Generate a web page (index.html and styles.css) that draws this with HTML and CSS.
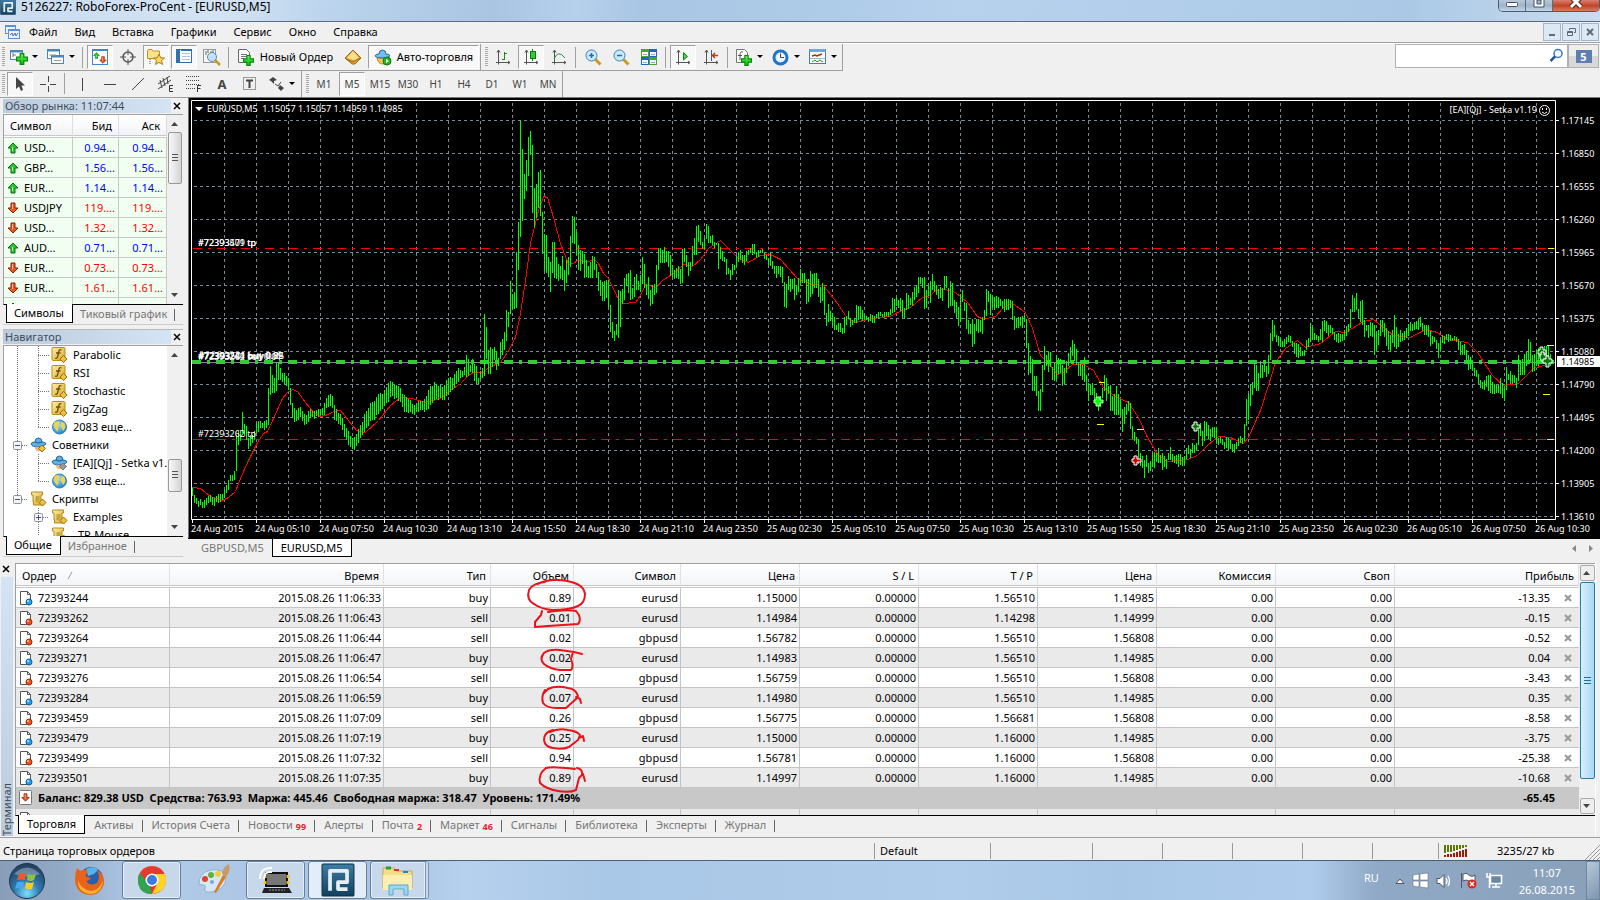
FILE: index.html
```html
<!DOCTYPE html>
<html lang="ru">
<head>
<meta charset="utf-8">
<title>5126227: RoboForex-ProCent - [EURUSD,M5]</title>
<link rel="stylesheet" href="styles.css">
</head>
<body>
<svg class="defs" width="0" height="0" aria-hidden="true">
  <defs>
    <linearGradient id="gold" x1="0" y1="0" x2="1" y2="1"><stop offset="0" stop-color="#fff0a8"/><stop offset="1" stop-color="#d9a520"/></linearGradient>
    <linearGradient id="plus" x1="0" y1="0" x2="0" y2="1"><stop offset="0" stop-color="#6bf06b"/><stop offset="1" stop-color="#00b800"/></linearGradient>
    <linearGradient id="navy" x1="0" y1="0" x2="0" y2="1"><stop offset="0" stop-color="#3f7da6"/><stop offset="1" stop-color="#10405f"/></linearGradient>
    <radialGradient id="orb" cx=".5" cy=".85" r=".8"><stop offset="0" stop-color="#7fe0ff"/><stop offset=".45" stop-color="#2f7ab0"/><stop offset="1" stop-color="#24405e"/></radialGradient>
    <radialGradient id="globe" cx=".4" cy=".35" r=".7"><stop offset="0" stop-color="#a8e0ff"/><stop offset="1" stop-color="#1b7fc8"/></radialGradient>
  </defs>
  <symbol id="up" viewBox="0 0 12 12"><path d="M6 1 11 6 8 6 8 11 4 11 4 6 1 6Z" fill="#2fc52f" stroke="#08700f"/><path d="M5 5h1v4H5z" fill="#a6f5a6"/></symbol>
  <symbol id="down" viewBox="0 0 12 12"><path d="M6 11 11 6 8 6 8 1 4 1 4 6 1 6Z" fill="#ee5a24" stroke="#8a2006"/><path d="M5 2h1v5H5z" fill="#ffb89a"/></symbol>
  <symbol id="drop" viewBox="0 0 7 4"><path d="M0 0H6L3 3Z" fill="#000"/></symbol>
  <symbol id="func" viewBox="0 0 16 16"><rect x=".5" y=".5" width="13" height="13" rx="1" fill="url(#gold)" stroke="#b98d1c"/><path d="M10 3C8 2 7.500 3 7 6L6 10Q5.500 12 3.500 11M4.500 6H9" fill="none" stroke="#6b5010" stroke-width="1.300"/><path d="M12 8.500 15.500 12 12 15.500 8.500 12Z" fill="#f0c040" stroke="#98700c"/></symbol>
  <symbol id="world" viewBox="0 0 16 16"><circle cx="8" cy="8" r="7" fill="url(#globe)" stroke="#2d84bd"/><path d="M3 3 7 2 8 4 6 7 7 9 6 13 4 10 2 7ZM10 3 13 4 14 8 12 12 10 9 9 7Z" fill="#f0d54a"/></symbol>
  <symbol id="hat" viewBox="0 0 17 16"><path d="M5 5Q5 1 8.500 1T12 5Q16 5 16 7Q14 10 8 10T1 7Q1 5 5 5Z" fill="#5db0e4" stroke="#2a6c9c"/><path d="M5 5Q8 7 12 5" stroke="#1f5c8c" fill="none"/><path d="M5 10Q5 15 10 14L12 10Z" fill="#e8b878"/></symbol>
  <symbol id="advisor" viewBox="0 0 17 16"><use href="#hat" width="17" height="16"/><path d="M12 8 15.500 11.500 12 15 8.500 11.500Z" fill="#f0c040" stroke="#98700c"/></symbol>
  <symbol id="advisor-off" viewBox="0 0 17 16"><use href="#hat" width="17" height="16"/><path d="M12 8 15.500 11.500 12 15 8.500 11.500Z" fill="#999" stroke="#777"/></symbol>
  <symbol id="script" viewBox="0 0 16 16"><path d="M1 1H12V4H10.500V11H13V14H3V11H2.500V4H1Z" fill="url(#gold)" stroke="#b08a20"/><path d="M5 6H9M5 8H9M5 10H8" stroke="#a07a20"/><path d="M12 8 15.500 11.500 12 15 8.500 11.500Z" fill="#f0c040" stroke="#98700c"/></symbol>
  <symbol id="g-line" viewBox="0 0 21 18"><path d="M10.500 0V18" stroke="#777" stroke-dasharray="1 1" fill="none"/></symbol>
  <symbol id="g-tee" viewBox="0 0 21 18"><path d="M10.500 0V18M10 9.500H21" stroke="#777" stroke-dasharray="1 1" fill="none"/></symbol>
  <symbol id="g-end" viewBox="0 0 21 18"><path d="M10.500 0V9M10 9.500H21" stroke="#777" stroke-dasharray="1 1" fill="none"/></symbol>
  <symbol id="g-minus" viewBox="0 0 21 18"><path d="M10.500 0V5M10.500 14V18M15 9.500H21" stroke="#777" stroke-dasharray="1 1" fill="none"/><rect x="6.500" y="5.500" width="8" height="8" rx="1" fill="#f4f4f4" stroke="#919191"/><path d="M8 9.500H13" stroke="#3a55a4"/></symbol>
  <symbol id="g-last" viewBox="0 0 21 18"><path d="M10.500 0V5M15 9.500H21" stroke="#777" stroke-dasharray="1 1" fill="none"/><rect x="6.500" y="5.500" width="8" height="8" rx="1" fill="#f4f4f4" stroke="#919191"/><path d="M8 9.500H13" stroke="#3a55a4"/></symbol>
  <symbol id="g-plus" viewBox="0 0 21 18"><path d="M10.500 0V5M10.500 14V18M15 9.500H21" stroke="#777" stroke-dasharray="1 1" fill="none"/><rect x="6.500" y="5.500" width="8" height="8" rx="1" fill="#f4f4f4" stroke="#919191"/><path d="M8 9.500H13M10.500 7V12" stroke="#3a55a4"/></symbol>
  <symbol id="page" viewBox="0 0 14 16"><path d="M1.500 1.500H8.500L11.500 4.500V14.500H1.500Z" fill="#fff" stroke="#555"/><path d="M8.500 1.500V4.500H11.500" fill="none" stroke="#555"/></symbol>
  <symbol id="buy" viewBox="0 0 14 16"><use href="#page" width="14" height="16"/><circle cx="10" cy="12" r="3" fill="#28a0ee" stroke="#0b5f9e"/><circle cx="9" cy="11" r="1" fill="#c5eaff"/></symbol>
  <symbol id="sell" viewBox="0 0 14 16"><use href="#page" width="14" height="16"/><circle cx="10" cy="12" r="3" fill="#ee5020" stroke="#9b2c08"/><circle cx="9" cy="11" r="1" fill="#ffc9b0"/></symbol>
  <symbol id="cross" viewBox="0 0 8 8"><path d="M1 1 7 7M7 1 1 7" stroke="#999" stroke-width="2"/></symbol>
  <symbol id="close" viewBox="0 0 8 8"><path d="M1 1 7 7M7 1 1 7" stroke="#000" stroke-width="1.500"/></symbol>
  <symbol id="arr-up" viewBox="0 0 8 5"><path d="M0 4H7L3.500 0Z" fill="#444"/></symbol>
  <symbol id="arr-down" viewBox="0 0 8 5"><path d="M0 0H7L3.500 4Z" fill="#444"/></symbol>
  <symbol id="axes" viewBox="0 0 16 16"><path d="M3.500 1V15.500M1 13.500H15M2 3.500 3.500 1 5 3.500M13 12 15 13.500 13 15" fill="none" stroke="#555"/></symbol>
  <symbol id="plussign" viewBox="0 0 10 10"><path d="M3.500 .5H6.500V3.500H9.500V6.500H6.500V9.500H3.500V6.500H.5V3.500H3.500Z" fill="url(#plus)" stroke="#078a07"/></symbol>
  <symbol id="logo" viewBox="0 0 32 32"><rect x="1" y="1" width="30" height="30" rx="1" fill="url(#navy)" stroke="#0c2f48"/><path d="M8.500 26V7.500H24.500V18H16V24.500H25" fill="none" stroke="#e6eef4" stroke-width="3.500" stroke-linejoin="round"/></symbol>
</svg>

<header class="titlebar">
  <svg class="i16" width="16" height="16"><use href="#logo"/></svg>
  <h1>5126227: RoboForex-ProCent - [EURUSD,M5]</h1>
  <div class="caption">
    <button aria-label="Свернуть"><svg width="14" height="8"><rect x="1.500" y="2.500" width="11" height="4" rx="1" fill="#fff" stroke="#445062"/></svg></button>
    <button aria-label="Развернуть"><svg width="14" height="10"><path d="M2 -3H12V7H2Z" fill="#fff" stroke="#445062"/><path d="M5 0H9V4H5Z" fill="#9fb5cd" stroke="#445062"/></svg></button>
    <button class="caption-close" aria-label="Закрыть"><svg width="14" height="10"><path d="M2 -3 12 7M12 -3 2 7" stroke="#5b2018" stroke-width="5"/><path d="M2 -3 12 7M12 -3 2 7" stroke="#fff" stroke-width="3"/></svg></button>
  </div>
</header>

<nav class="menubar">
  <svg class="menu-ico" width="16" height="16"><g fill="#eaf3ff" stroke="#5b8fd8"><rect x=".5" y="1.500" width="10" height="8"/><rect x="3.500" y="5.500" width="11" height="9"/></g><path d="M.5 2.500H11M3.500 6.500H15" stroke="#5b8fd8"/><path d="M5 11 7 9 8 12 10 9 11 12 13 9" fill="none" stroke="#3a70c8"/></svg>
  <button>Файл</button><button>Вид</button><button>Вставка</button><button>Графики</button><button>Сервис</button><button>Окно</button><button>Справка</button>
  <div class="mdi">
    <button aria-label="Свернуть окно"><svg width="10" height="10"><path d="M2 8H8" stroke="#5d6b7c" stroke-width="2"/></svg></button>
    <button aria-label="Восстановить окно"><svg width="10" height="10"><path d="M3.500 3V1.500H9.500V5.500H8M1.500 4.500H6.500V8.500H1.500ZM1 5.500H7" fill="none" stroke="#5d6b7c"/></svg></button>
    <button aria-label="Закрыть окно"><svg width="10" height="10"><path d="M2 2 8 8M8 2 2 8" stroke="#5d6b7c" stroke-width="2"/></svg></button>
  </div>
</nav>

<div class="toolrow">
  <div class="toolbar">
    <span class="grip"></span>
    <button class="wide" aria-label="Новый график"><svg width="18" height="16"><rect x=".5" y="1.500" width="12" height="9" fill="#fff" stroke="#4a86b8"/><path d="M.5 2.500H12.500" stroke="#4a86b8" stroke-width="2"/><path d="M3 8V4M3 6H6" stroke="#777"/><use href="#plussign" x="6" y="4" width="12" height="12"/></svg><svg width="7" height="4"><use href="#drop"/></svg></button>
    <button class="wide" aria-label="Профили"><svg width="18" height="16"><g fill="#fff" stroke="#4a86b8"><rect x=".5" y=".5" width="12" height="9"/><rect x="4.500" y="6.500" width="12" height="8"/></g><path d="M.5 1.500H12.500M4.500 7.500H16.500" stroke="#4a86b8" stroke-width="2"/><path d="M7 11.500H14M2 6H9" stroke="#999"/></svg><svg width="7" height="4"><use href="#drop"/></svg></button>
    <span class="sep"></span>
    <button class="tool on" aria-label="Обзор рынка"><svg width="16" height="16"><rect x=".5" y=".5" width="15" height="15" fill="#fff" stroke="#3f87c8"/><path d="M.5 1H15.500" stroke="#3f87c8" stroke-width="2"/><use href="#up" x="1" y="3" width="7" height="7"/><use href="#down" x="7" y="7" width="8" height="8"/></svg></button>
    <button class="tool" aria-label="Окно данных"><svg width="16" height="16"><circle cx="8" cy="8" r="5" fill="none" stroke="#555" stroke-width="1.500"/><path d="M8 0V6M8 10V16M0 8H6M10 8H16" stroke="#555"/></svg></button>
    <button class="tool on" aria-label="Навигатор"><svg width="18" height="16"><path d="M.5 2V9.500H12.500V2H6L5 .5H1.500Z" fill="#f8e28a" stroke="#b8942a"/><path d="M3 10V15" stroke="#555" stroke-dasharray="1 1"/><path d="M12 5 13.700 8.800 17.500 9 14.500 11.500 15.500 15.500 12 13.300 8.500 15.500 9.500 11.500 6.500 9 10.300 8.800Z" fill="#ffd95a" stroke="#a87c10"/></svg></button>
    <button class="tool on" aria-label="Терминал"><svg width="16" height="16"><rect x=".5" y=".5" width="15" height="13" fill="#fff" stroke="#2f70b0"/><path d="M2.500 1V13" stroke="#2f70b0" stroke-width="3"/><path d="M6 4.500H14M6 7.500H14M6 10.500H14" stroke="#a8c4e8"/><path d="M5 1H15" stroke="#2f70b0" stroke-width="2"/></svg></button>
    <button class="tool" aria-label="Тестер стратегий"><svg width="18" height="17"><rect x=".5" y=".5" width="12" height="13" fill="#f5f5f5" stroke="#999"/><path d="M3 2V6M5 1V4M8 2V5M10 1V5" stroke="#666"/><circle cx="9" cy="8" r="4.500" fill="#bfe3fa" stroke="#5a87ad"/><path d="M12 11 17 16" stroke="#c99a20" stroke-width="2.500"/></svg></button>
    <span class="sep"></span>
    <button class="textual order"><svg width="17" height="17"><path d="M.5 .5H8.500L11.500 3.500V13.500H.5Z" fill="#fff" stroke="#666"/><path d="M3 5.500H9M3 7.500H9M3 9.500H6" stroke="#777"/><use href="#plussign" x="5" y="6" width="11" height="11"/></svg>Новый Ордер</button>
    <button class="tool" aria-label="MetaEditor"><svg width="18" height="16"><path d="M1 9 9 1 12 4 17 9 11 15H8Z" fill="#e0a838" stroke="#9a6a12"/><path d="M3 9 9 2 15 9 10 11Z" fill="#ffe08a"/><path d="M2 10 9 13 16 9" stroke="#9a6a12" fill="none"/></svg></button>
    <button class="textual on auto"><svg width="18" height="17"><path d="M3 9Q4 15 9 15T15 9Z" fill="#f0c456" stroke="#b48a22"/><path d="M5 5Q5 1 8.500 1T12 5Q16 5 16 7Q14 9 8 9T1 7Q1 5 5 5Z" fill="#70bff0" stroke="#2a6c9c"/><circle cx="13" cy="12" r="4" fill="#22b422" stroke="#0d7d0d"/><path d="M12 10V14L15 12Z" fill="#fff"/></svg>Авто-торговля</button>
  </div>
  <div class="toolbar">
    <span class="grip"></span>
    <button class="tool" aria-label="Бары"><svg width="16" height="16"><use href="#axes" width="16" height="16"/><path d="M9.500 3V11M9.500 4.500H12M7 10.500H9.500" stroke="#1a8a1a" fill="none"/></svg></button>
    <button class="tool on" aria-label="Свечи"><svg width="16" height="16"><use href="#axes" width="16" height="16"/><path d="M9.500 0V12" stroke="#0c7a0c"/><rect x="7.500" y="2.500" width="5" height="7" fill="#2fce2f" stroke="#0c7a0c"/></svg></button>
    <button class="tool" aria-label="Линия"><svg width="16" height="16"><use href="#axes" width="16" height="16"/><path d="M3 10Q7 0 14 9" stroke="#1a9a3a" fill="none"/></svg></button>
    <span class="sep"></span>
    <button class="tool" aria-label="Увеличить"><svg width="17" height="17"><path d="M10 10 15.500 15.500" stroke="#c99a20" stroke-width="3"/><circle cx="6.500" cy="6.500" r="5.500" fill="#c9eafc" stroke="#3f7fb5"/><path d="M4 6.500H9M6.500 4V9" stroke="#2a6ba5" stroke-width="1.500"/></svg></button>
    <button class="tool" aria-label="Уменьшить"><svg width="17" height="17"><path d="M10 10 15.500 15.500" stroke="#c99a20" stroke-width="3"/><circle cx="6.500" cy="6.500" r="5.500" fill="#c9eafc" stroke="#3f7fb5"/><path d="M4 6.500H9" stroke="#2a6ba5" stroke-width="1.500"/></svg></button>
    <button class="tool" aria-label="Мозаика"><svg width="16" height="16"><path d="M0 0H8V8H0ZM8 8H16V16H8Z" fill="#4ba52a"/><path d="M8 0H16V8H8ZM0 8H8V16H0Z" fill="#2463cf"/><path d="M1 3H7V7H1ZM9 3H15V7H9ZM1 11H7V15H1ZM9 11H15V15H9Z" fill="#f4f8ff"/><path d="M2 5.500H6M10 5.500H14M2 13.500H6M10 13.500H14" stroke="#9ab"/></svg></button>
    <span class="sep"></span>
    <button class="tool on" aria-label="Автопрокрутка"><svg width="16" height="16"><use href="#axes" width="16" height="16"/><path d="M8.500 3.500V11L12.500 7.500Z" fill="#4fd04f" stroke="#0f8a0f"/></svg></button>
    <button class="tool" aria-label="Сдвиг графика"><svg width="16" height="16"><use href="#axes" width="16" height="16"/><path d="M8.500 1V12" stroke="#2a60b8"/><path d="M15 6.500H10M12 4 9.500 6.500 12 9" stroke="#c03a10" fill="none" stroke-width="1.500"/></svg></button>
    <span class="sep"></span>
    <button class="wide" aria-label="Индикаторы"><svg width="18" height="17"><path d="M1.500 .5H9.500L12.500 3.500V13.500H1.500Z" fill="#fff" stroke="#777"/><path d="M8 3Q5 2 5 6V11M3 6.500H7" fill="none" stroke="#555"/><use href="#plussign" x="6" y="6" width="11" height="11"/></svg><svg width="7" height="4"><use href="#drop"/></svg></button>
    <button class="wide" aria-label="Периоды"><svg width="18" height="17"><circle cx="8.500" cy="8.500" r="6.500" fill="#eef7ff" stroke="#1f74d0" stroke-width="3"/><path d="M8.500 4.500V8.500H12" stroke="#445" fill="none"/></svg><svg width="7" height="4"><use href="#drop"/></svg></button>
    <button class="wide" aria-label="Шаблоны"><svg width="18" height="16"><rect x=".5" y=".5" width="16" height="14" fill="#fff" stroke="#3f80b8"/><path d="M.5 1.500H16.500" stroke="#6fa8dd" stroke-width="3"/><path d="M3 7 6 6 8 7 13 5" fill="none" stroke="#a33010" stroke-width="1.500"/><path d="M1 9.500H16" stroke="#9bc"/><path d="M3 13 6 11 8 13 11 11 14 13" fill="none" stroke="#2a9a2a"/></svg><svg width="7" height="4"><use href="#drop"/></svg></button>
  </div>
  <div class="search">
    <input type="text" aria-label="Поиск">
    <svg width="15" height="15"><circle cx="9" cy="5.500" r="4" fill="#fff" stroke="#3a70cf" stroke-width="1.500"/><path d="M6 8.500 1.500 13" stroke="#2a50b8" stroke-width="2.500"/></svg>
    <button aria-label="Сообщения"><span class="bubble">5</span></button>
  </div>
</div>

<div class="toolrow second">
  <div class="toolbar">
    <span class="grip"></span>
    <button class="tool on" aria-label="Курсор"><svg width="16" height="16"><path d="M4 1V13L7 10.500 9 15 11 14 9.500 9.500H13Z" fill="#444"/></svg></button>
    <button class="tool" aria-label="Перекрестие"><svg width="16" height="16"><path d="M8.500 0V6M8.500 10V16M0 8.500H6M10 8.500H16" stroke="#444"/></svg></button>
    <span class="sep"></span>
    <button class="tool" aria-label="Вертикальная линия"><svg width="16" height="16"><path d="M8.500 2V15" stroke="#444"/></svg></button>
    <button class="tool" aria-label="Горизонтальная линия"><svg width="16" height="16"><path d="M2 8.500H14" stroke="#444"/></svg></button>
    <button class="tool" aria-label="Трендовая линия"><svg width="16" height="16"><path d="M2 14 14 2" stroke="#444"/></svg></button>
    <button class="tool" aria-label="Канал"><svg width="18" height="17"><path d="M1 9 13 1M1 14 14 5M3 5 5 13M6 3 8 11M10 2 11 9" stroke="#444"/><path d="M16 10.500H12.500V16.500H16M12 13.500H15.500" stroke="#333" fill="none"/></svg></button>
    <button class="tool" aria-label="Фибоначчи"><svg width="18" height="17"><path d="M1 1.500H15M1 5.500H15M1 9.500H15M1 13.500H10" stroke="#444" stroke-dasharray="1 1"/><path d="M16 10.500H12.500V17M12 13.500H15.500" stroke="#333" fill="none"/></svg></button>
    <button class="tool glyph">A</button>
    <button class="tool" aria-label="Текстовая метка"><svg width="14" height="14"><rect x=".5" y=".5" width="12" height="12" fill="none" stroke="#444" stroke-dasharray="1 1"/><path d="M3 3.500H10M6.500 3V11" stroke="#444" stroke-width="2"/></svg></button>
    <button class="wide" aria-label="Стрелки"><svg width="16" height="16"><path d="M4 1 8 4 5 5 5 8 2 5 0 4Z" fill="#444"/><path d="M6 8 9 10 12 6" fill="none" stroke="#444"/><path d="M11 9 15 12 12 15 9 12Z" fill="#444"/></svg><svg width="7" height="4"><use href="#drop"/></svg></button>
  </div>
  <div class="toolbar periods">
    <span class="grip"></span>
    <button class="tool">M1</button><button class="tool on">M5</button><button class="tool">M15</button><button class="tool">M30</button><button class="tool">H1</button><button class="tool">H4</button><button class="tool">D1</button><button class="tool">W1</button><button class="tool">MN</button>
  </div>
</div>

<main class="workspace">
  <aside class="dock">
    <section class="pane">
      <header><h2>Обзор рынка: 11:07:44</h2><button aria-label="Закрыть обзор рынка"><svg width="8" height="8"><use href="#close"/></svg></button></header>
      <div class="pane-body">
        <div class="pane-scroll">
        <table class="quotes">
          <colgroup><col><col class="bid"><col class="ask"></colgroup>
          <thead><tr><th>Символ</th><th>Бид</th><th>Аск</th></tr></thead>
          <tbody>
            <tr class="rise"><td><svg width="12" height="12"><use href="#up"/></svg>USD...</td><td>0.94...</td><td>0.94...</td></tr>
            <tr class="rise"><td><svg width="12" height="12"><use href="#up"/></svg>GBP...</td><td>1.56...</td><td>1.56...</td></tr>
            <tr class="rise"><td><svg width="12" height="12"><use href="#up"/></svg>EUR...</td><td>1.14...</td><td>1.14...</td></tr>
            <tr class="fall"><td><svg width="12" height="12"><use href="#down"/></svg>USDJPY</td><td>119....</td><td>119....</td></tr>
            <tr class="fall"><td><svg width="12" height="12"><use href="#down"/></svg>USD...</td><td>1.32...</td><td>1.32...</td></tr>
            <tr class="rise"><td><svg width="12" height="12"><use href="#up"/></svg>AUD...</td><td>0.71...</td><td>0.71...</td></tr>
            <tr class="fall"><td><svg width="12" height="12"><use href="#down"/></svg>EUR...</td><td>0.73...</td><td>0.73...</td></tr>
            <tr class="fall"><td><svg width="12" height="12"><use href="#down"/></svg>EUR...</td><td>1.61...</td><td>1.61...</td></tr>
            <tr class="rise"><td><svg width="12" height="12"><use href="#up"/></svg></td><td></td><td></td></tr>
          </tbody>
        </table>
        </div>
        <div class="scroll"><svg width="8" height="5"><use href="#arr-up"/></svg><i class="thumb high"></i><svg class="end" width="8" height="5"><use href="#arr-down"/></svg></div>
      </div>
      <div class="tabs"><button class="tab active">Символы</button><button class="tab">Тиковый график</button></div>
    </section>
    <section class="pane navigator">
      <header><h2>Навигатор</h2><button aria-label="Закрыть навигатор"><svg width="8" height="8"><use href="#close"/></svg></button></header>
      <div class="pane-body">
        <ul class="tree">
          <li><svg class="g"><use href="#g-line"/></svg><svg class="g"><use href="#g-tee"/></svg><svg class="t"><use href="#func"/></svg>Parabolic</li>
          <li><svg class="g"><use href="#g-line"/></svg><svg class="g"><use href="#g-tee"/></svg><svg class="t"><use href="#func"/></svg>RSI</li>
          <li><svg class="g"><use href="#g-line"/></svg><svg class="g"><use href="#g-tee"/></svg><svg class="t"><use href="#func"/></svg>Stochastic</li>
          <li><svg class="g"><use href="#g-line"/></svg><svg class="g"><use href="#g-tee"/></svg><svg class="t"><use href="#func"/></svg>ZigZag</li>
          <li><svg class="g"><use href="#g-line"/></svg><svg class="g"><use href="#g-end"/></svg><svg class="t"><use href="#world"/></svg>2083 еще...</li>
          <li><svg class="g"><use href="#g-minus"/></svg><svg class="t"><use href="#advisor"/></svg>Советники</li>
          <li><svg class="g"><use href="#g-line"/></svg><svg class="g"><use href="#g-tee"/></svg><svg class="t"><use href="#advisor-off"/></svg>[EA][Qj] - Setka v1.19</li>
          <li><svg class="g"><use href="#g-line"/></svg><svg class="g"><use href="#g-end"/></svg><svg class="t"><use href="#world"/></svg>938 еще...</li>
          <li><svg class="g"><use href="#g-last"/></svg><svg class="t"><use href="#script"/></svg>Скрипты</li>
          <li><svg class="g"></svg><svg class="g"><use href="#g-plus"/></svg><svg class="t"><use href="#script"/></svg>Examples</li>
          <li><svg class="g"></svg><svg class="g"><use href="#g-line"/></svg><svg class="t"><use href="#script"/></svg>_TP-Mouse</li>
        </ul>
        <div class="scroll"><svg width="8" height="5"><use href="#arr-up"/></svg><i class="thumb low"></i><svg class="end" width="8" height="5"><use href="#arr-down"/></svg></div>
      </div>
      <div class="tabs"><button class="tab active">Общие</button><button class="tab">Избранное</button></div>
    </section>
  </aside>

  <section class="charts">
    <svg class="chart" id="chart" viewBox="188 97 1412 441" preserveAspectRatio="xMinYMin meet" role="img" aria-label="График EURUSD,M5">
      <rect x="188" y="97" width="1412" height="441" fill="#000"/>
      <path d="M188 97.500H1600M188.500 97V538" stroke="#777"/>
      <g transform="translate(.5 .5)" shape-rendering="crispEdges" fill="none">
        <path id="grid" stroke="#778899" stroke-dasharray="3 3"/>
        <path d="M192 362H1555" stroke="#778899"/>
        <path d="M192 248H1555M192 439H1555" stroke="#f00" stroke-dasharray="9 6 3 6"/>
        <path id="average" stroke="#f00"/>
      </g>
      <path d="M192 362H1555" stroke="#32cd32" stroke-width="4" stroke-dasharray="9 6 3 6"/>
      <path id="bars" fill="#0f0" shape-rendering="crispEdges"/>
      <path d="M1099 382H1105M1097 424H1104M1137 429H1144M1547 345H1554M1543 394H1550M1547 439H1554M1548 248H1554" stroke="#ff0" shape-rendering="crispEdges"/>
      <g fill="#067a06" stroke="#fff">
        <path d="M1096 397H1100V400H1103V403H1100V406H1096V403H1094V400H1096Z" fill="#0f0" stroke="#bfb"/>
        <path d="M1134 456H1137V459H1141V462H1137V465H1134V462H1132V459H1134Z" fill="#c00"/>
        <path d="M1194 422H1197V425H1200V428H1197V431H1194V428H1192V425H1194Z"/>
        <path d="M1540 347H1543V350H1546V354H1543V357H1540V354H1538V350H1540Z"/>
        <path d="M1541 352H1544V355H1547V359H1544V361H1541V359H1540V355H1541Z"/>
        <path d="M1546 356H1549V359H1552V363H1549V367H1546V363H1543V359H1546Z"/>
      </g>
      <path d="M191.500 519.500V100.500H1555.500V519.500Z" fill="none" stroke="#fff"/>
      <path id="ticks" stroke="#fff" fill="none" shape-rendering="crispEdges"/>
      <path d="M195 107H203L199 111Z" fill="#fff"/>
      <text x="207" y="112">EURUSD,M5&#160; 1.15057 1.15057 1.14959 1.14985</text>
      <text x="1537" y="113" text-anchor="end">[EA][Qj] - Setka v1.19</text>
      <g fill="none" stroke="#fff"><circle cx="1544.500" cy="110.500" r="5"/><path d="M1542 112Q1544.500 115 1547 112M1542.500 108V110M1546.500 108V110"/></g>
      <text x="198" y="246">#72393479 tp</text><text x="198" y="246">#72393501 tp</text>
      <text x="198" y="437">#72393262 tp</text>
      <text x="198" y="359">#72393244 buy 0.89</text><text x="198" y="359">#72393271 buy 0.02</text><text x="199" y="359">#72393501 buy 0.25</text><text x="198" y="360">#72393262 sell 0.01</text>
      <rect x="1557" y="356" width="43" height="11" fill="#fff"/>
      <text class="now" x="1561" y="365">1.14985</text>
      <g id="labels"></g>
    </svg>
    <div class="charttabs"><button>GBPUSD,M5</button><button class="active">EURUSD,M5</button>
      <svg width="24" height="8"><path d="M5 0V7L1 3.500ZM18 0V7L22 3.500Z" fill="#888"/></svg></div>
  </section>
</main>

<section class="terminal">
  <div class="spine"><button aria-label="Закрыть терминал"><svg width="8" height="8"><use href="#close"/></svg></button><span>Терминал</span></div>
  <div class="terminal-main">
    <div class="terminal-body">
      <div class="orders-clip">
      <table class="orders">
        <colgroup><col class="c-order"><col class="c-time"><col class="c-type"><col class="c-vol"><col class="c-type"><col class="c-num"><col class="c-num"><col class="c-num"><col class="c-num"><col class="c-num"><col class="c-num"><col></colgroup>
        <thead><tr><th>Ордер <svg width="8" height="9"><path d="M1 8 5 1" stroke="#999"/></svg></th><th>Время</th><th>Тип</th><th>Объем</th><th>Символ</th><th>Цена</th><th>S / L</th><th>T / P</th><th>Цена</th><th>Комиссия</th><th>Своп</th><th>Прибыль</th></tr></thead>
        <tbody>
          <tr><td><svg width="14" height="16"><use href="#buy"/></svg>72393244</td><td>2015.08.26 11:06:33</td><td>buy</td><td>0.89</td><td>eurusd</td><td>1.15000</td><td>0.00000</td><td>1.56510</td><td>1.14985</td><td>0.00</td><td>0.00</td><td>-13.35<button aria-label="Закрыть ордер"><svg width="8" height="8"><use href="#cross"/></svg></button></td></tr>
          <tr><td><svg width="14" height="16"><use href="#sell"/></svg>72393262</td><td>2015.08.26 11:06:43</td><td>sell</td><td>0.01</td><td>eurusd</td><td>1.14984</td><td>0.00000</td><td>1.14298</td><td>1.14999</td><td>0.00</td><td>0.00</td><td>-0.15<button aria-label="Закрыть ордер"><svg width="8" height="8"><use href="#cross"/></svg></button></td></tr>
          <tr><td><svg width="14" height="16"><use href="#sell"/></svg>72393264</td><td>2015.08.26 11:06:44</td><td>sell</td><td>0.02</td><td>gbpusd</td><td>1.56782</td><td>0.00000</td><td>1.56510</td><td>1.56808</td><td>0.00</td><td>0.00</td><td>-0.52<button aria-label="Закрыть ордер"><svg width="8" height="8"><use href="#cross"/></svg></button></td></tr>
          <tr><td><svg width="14" height="16"><use href="#buy"/></svg>72393271</td><td>2015.08.26 11:06:47</td><td>buy</td><td>0.02</td><td>eurusd</td><td>1.14983</td><td>0.00000</td><td>1.56510</td><td>1.14985</td><td>0.00</td><td>0.00</td><td>0.04<button aria-label="Закрыть ордер"><svg width="8" height="8"><use href="#cross"/></svg></button></td></tr>
          <tr><td><svg width="14" height="16"><use href="#sell"/></svg>72393276</td><td>2015.08.26 11:06:54</td><td>sell</td><td>0.07</td><td>gbpusd</td><td>1.56759</td><td>0.00000</td><td>1.56510</td><td>1.56808</td><td>0.00</td><td>0.00</td><td>-3.43<button aria-label="Закрыть ордер"><svg width="8" height="8"><use href="#cross"/></svg></button></td></tr>
          <tr><td><svg width="14" height="16"><use href="#buy"/></svg>72393284</td><td>2015.08.26 11:06:59</td><td>buy</td><td>0.07</td><td>eurusd</td><td>1.14980</td><td>0.00000</td><td>1.56510</td><td>1.14985</td><td>0.00</td><td>0.00</td><td>0.35<button aria-label="Закрыть ордер"><svg width="8" height="8"><use href="#cross"/></svg></button></td></tr>
          <tr><td><svg width="14" height="16"><use href="#sell"/></svg>72393459</td><td>2015.08.26 11:07:09</td><td>sell</td><td>0.26</td><td>gbpusd</td><td>1.56775</td><td>0.00000</td><td>1.56681</td><td>1.56808</td><td>0.00</td><td>0.00</td><td>-8.58<button aria-label="Закрыть ордер"><svg width="8" height="8"><use href="#cross"/></svg></button></td></tr>
          <tr><td><svg width="14" height="16"><use href="#buy"/></svg>72393479</td><td>2015.08.26 11:07:19</td><td>buy</td><td>0.25</td><td>eurusd</td><td>1.15000</td><td>0.00000</td><td>1.16000</td><td>1.14985</td><td>0.00</td><td>0.00</td><td>-3.75<button aria-label="Закрыть ордер"><svg width="8" height="8"><use href="#cross"/></svg></button></td></tr>
          <tr><td><svg width="14" height="16"><use href="#sell"/></svg>72393499</td><td>2015.08.26 11:07:32</td><td>sell</td><td>0.94</td><td>gbpusd</td><td>1.56781</td><td>0.00000</td><td>1.16000</td><td>1.56808</td><td>0.00</td><td>0.00</td><td>-25.38<button aria-label="Закрыть ордер"><svg width="8" height="8"><use href="#cross"/></svg></button></td></tr>
          <tr><td><svg width="14" height="16"><use href="#buy"/></svg>72393501</td><td>2015.08.26 11:07:35</td><td>buy</td><td>0.89</td><td>eurusd</td><td>1.14997</td><td>0.00000</td><td>1.16000</td><td>1.14985</td><td>0.00</td><td>0.00</td><td>-10.68<button aria-label="Закрыть ордер"><svg width="8" height="8"><use href="#cross"/></svg></button></td></tr>
          <tr class="total"><td colspan="11"><svg width="14" height="16"><rect x=".5" y=".5" width="12" height="14" rx="1" fill="#fff" stroke="#777"/><use href="#down" x="2" y="3" width="9" height="9"/></svg>Баланс: 829.38 USD&#160; Средства: 763.93&#160; Маржа: 445.46&#160; Свободная маржа: 318.47&#160; Уровень: 171.49%</td><td>-65.45</td></tr>
          <tr class="rest"><td><svg width="14" height="16"><use href="#page"/></svg>67367368</td><td>2015.07.28 21:53:21</td><td>buy limit</td><td>0.05</td><td>gbpusd</td><td>1.52896</td><td>0.00000</td><td>1.53396</td><td>1.56367</td><td></td><td></td><td></td></tr>
        </tbody>
      </table>
      </div>
      <div class="scroll boxed"><span><svg width="8" height="5"><use href="#arr-up"/></svg></span><i class="thumb blue"></i><span class="end"><svg width="8" height="5"><use href="#arr-down"/></svg></span></div>
    </div>
    <div class="tabs"><button class="tab active">Торговля</button><button class="tab">Активы</button><button class="tab">История Счета</button><button class="tab">Новости<b>99</b></button><button class="tab">Алерты</button><button class="tab">Почта<b>2</b></button><button class="tab">Маркет<b>46</b></button><button class="tab">Сигналы</button><button class="tab">Библиотека</button><button class="tab">Эксперты</button><button class="tab">Журнал</button></div>
  </div>
  <svg class="marks" viewBox="520 575 70 225" width="70" height="225">
    <g fill="none" stroke="#e8141c" stroke-width="2" stroke-linejoin="round" stroke-linecap="round">
      <path d="M545 582Q533 583 529 590Q526 600 534 604Q541 609 552 610Q570 610 578 606Q585 603 585 594Q584 587 577 584Q568 580 556 580Q545 580 538 584"/>
      <path d="M542 611 541 615 535 622V627L548 626 578 624Q581 621 579 615L576 611Q566 609 548 612"/>
      <path d="M582 654 574 652 560 650Q549 649 544 653Q539 659 544 664Q550 669 560 670L571 670Q574 667 571 659L573 652"/>
      <path d="M545 690Q541 696 543 703Q547 708 556 708H566L576 699 578 696Q576 689 568 688Q556 685 548 689L544 693M576 697 580 699 581 703"/>
      <path d="M553 730Q544 732 544 740Q545 747 553 748Q562 750 569 747L578 740 580 735Q577 731 568 730Q558 728 550 732M579 738 583 736 584 741"/>
      <path d="M575 769Q551 766 546 768Q538 774 540 783Q546 789 558 791Q570 793 576 790L579 778 583 774 585 781M577 768Q583 769 582 775"/>
    </g>
  </svg>
</section>

<footer class="statusbar"><span class="s-main">Страница торговых ордеров</span><span class="s-profile">Default</span><span class="s-a"></span><span class="s-b"></span><span class="s-b"></span><span class="s-b"></span><span class="s-b"></span><span class="s-c"></span>
  <span class="s-net"><svg width="24" height="12"><path d="M1 0V8M4 0V7M7 0V7M10 0V6M13 0V5M16 0V4M19 0V3M22 0V2" stroke="#5a7a08" stroke-width="2"/><path d="M1 10V12M4 9V12M7 9V12M10 8V12M13 7V12M16 6V12M19 5V12M22 4V12" stroke="#a01808" stroke-width="2"/></svg><em>3235/27 kb</em></span>
  <svg class="sizer" width="16" height="16"><path d="M1 16 16 1M5 16 16 5M9 16 16 9M13 16 16 13" stroke="#999"/></svg></footer>

<footer class="taskbar">
  <button class="start" aria-label="Пуск"><svg width="38" height="38"><circle cx="19" cy="19" r="17.500" fill="url(#orb)" stroke="#1c3850"/><path d="M6 12Q19 -1 32 12Q19 17 6 12Z" fill="#fff" opacity=".3"/><path d="M11 12Q15 10 18 12L17 18Q13 17 9 18Z" fill="#f0572a"/><path d="M20 12Q24 14 28 12L26 18Q23 20 19 18Z" fill="#8bc53f"/><path d="M9 20Q13 19 16 20L15 26Q11 25 7 27Z" fill="#45a8ee"/><path d="M18 20Q22 22 26 20L24 27Q20 28 17 26Z" fill="#fbcb2c"/></svg></button>
  <button class="task" aria-label="Firefox"><svg width="32" height="32"><circle cx="17" cy="15" r="12" fill="#2b5fae"/><path d="M12 5Q20 1 24 6L20 10 14 12Z" fill="#56b4e8"/><path d="M3 4Q6 8 9 6Q13 5 14 8Q10 11 13 13L17 14Q14 18 12 17Q16 23 23 19Q27 14 23 6Q31 11 30 19Q27 31 16 31Q2 30 1 16Q1 9 3 4Z" fill="#e8641b"/><path d="M4 16Q6 25 17 27Q26 26 29 16Q28 30 15 30Q3 27 4 16Z" fill="#f9b02b"/></svg></button>
  <button class="task run" aria-label="Chrome"><svg width="32" height="32"><circle cx="16" cy="16" r="14" fill="#e33b2e"/><path d="M4 9 13 20 16 30Q2 30 2 16Q2 12 4 9Z" fill="#32a350"/><path d="M16 30Q31 28 30 14L29 10H16L21 20Z" fill="#fdd329"/><circle cx="16" cy="16" r="6.500" fill="#fff"/><circle cx="16" cy="16" r="5" fill="#3a7de0"/></svg></button>
  <button class="task" aria-label="Paint"><svg width="34" height="32"><path d="M2 21Q1 9 14 6Q26 4 29 13Q29 26 14 28Q6 29 8 24Q10 20 2 21Z" fill="#d5e8f7" stroke="#8bb0d0"/><circle cx="8" cy="15" r="3" fill="#d8442c"/><circle cx="14" cy="11" r="3" fill="#62b045"/><circle cx="21" cy="10" r="3" fill="#f4ce3c"/><circle cx="15" cy="18" r="2" fill="#7ba8d0"/><path d="M17 28 26 11 29 13 19 29Z" fill="#dd7b22"/><path d="M25 10Q26 3 32 0Q34 7 29 13Z" fill="#c79a6a"/></svg></button>
  <button class="task run" aria-label="Терминал связи"><svg width="34" height="32"><path d="M7 9H28V22H7Z" fill="#777" stroke="#111" stroke-width="2"/><path d="M6 11V21M29 11V21" stroke="#f0c020" stroke-width="3" stroke-dasharray="3 3"/><path d="M5 24H30L33 29H3Z" fill="#222"/><path d="M10 26H26" stroke="#999" stroke-dasharray="2 1"/><path d="M1 15Q1 3 13 4M5 15Q5 7 13 8" stroke="#fff" stroke-width="2" fill="none"/></svg></button>
  <button class="task run lit" aria-label="MetaTrader"><svg width="34" height="34"><use href="#logo"/></svg></button>
  <button class="task run stack" aria-label="Проводник"><svg width="34" height="32"><path d="M2 4H13L15 7H31V24H2Z" fill="#f4de8a" stroke="#c9a84a"/><path d="M5 4H10" stroke="#2a9a3a" stroke-width="3"/><path d="M13 6H18" stroke="#d33" stroke-width="2"/><path d="M22 8H27" stroke="#28c" stroke-width="2"/><path d="M2 11H31V26H2Z" fill="#fbeeb0"/><path d="M8 21H27V31H23V25H12V31H8Z" fill="#9dd6f0" stroke="#5aa8d0"/></svg></button>
  <div class="tray">
    <span>RU</span>
    <svg width="10" height="6"><path d="M1 5.500H9L5 1Z" fill="#f4f4f4" stroke="#556"/></svg>
    <svg width="17" height="17"><path d="M1 3 7 2V8H1ZM8 2 16 1V8H8ZM1 9H7V15L1 14ZM8 9H16V16L8 15Z" fill="#fff" stroke="#56657a" stroke-width=".5"/></svg>
    <svg width="17" height="16"><path d="M1 5.500H4L8 1.500V14.500L4 10.500H1Z" fill="#fff" stroke="#556"/><path d="M10 5Q12 8 10 11M12 3Q15 8 12 13" fill="none" stroke="#fff" stroke-width="1.300"/></svg>
    <svg width="18" height="17"><path d="M1.500 1V16M3 2Q6 0 9 3T15 3V10Q12 11 9 9T3 9Z" fill="#fff" stroke="#556"/><circle cx="12" cy="12" r="4.500" fill="#d8281c"/><path d="M10 10 14 14M14 10 10 14" stroke="#fff" stroke-width="1.500"/></svg>
    <svg width="18" height="17"><rect x="5.500" y="3.500" width="11" height="8" fill="#6c86a0" stroke="#fff" stroke-width="1.500"/><path d="M7 15H15M11 12V15M2 1V5H4.500V16M5 1V5" stroke="#fff" stroke-width="1.500" fill="none"/></svg>
    <time><span>11:07</span><span>26.08.2015</span></time>
    <button class="desktop" aria-label="Показать рабочий стол"></button>
  </div>
</footer>
<script src="chart.js"></script>
</body>
</html>
```
FILE: styles.css
```css
:root { --ui: "Noto Sans", "Open Sans", sans-serif; --face: #f0f0f0; --line: #a0a0a0; }
* { box-sizing: border-box; }
body { margin: 0; height: 100vh; display: flex; flex-direction: column; overflow: hidden; background: var(--face); font: 11px/14px var(--ui); color: #000; }
button { font: inherit; color: inherit; border: 0; padding: 0; margin: 0; background: none; }
h1, h2, ul { margin: 0; padding: 0; font-size: inherit; font-weight: normal; list-style: none; }
svg { flex: none; display: block; }
.defs { position: absolute; }

.titlebar { flex: none; height: 22px; display: flex; align-items: flex-start; border-bottom: 1px solid #5b6b80; background: linear-gradient(100deg, #c9dcf0 0, #d3e3f3 14%, #bdd5ee 20%, #a9c5e2 31%, #b6d1ec 36%, #a9c6e4 40%, #aecbe8 52%, #b7d2ed 60%, #abc9e6 88%, #cadcf0 100%); }
.i16 { margin: -1px 5px 0 0; }
.titlebar h1 { font-size: 12px; line-height: 14px; flex: 1; }
.caption { display: flex; height: 12px; border: 1px solid #4b5b70; border-top: 0; border-radius: 0 0 5px 5px; overflow: hidden; }
.caption button { width: 27px; display: flex; justify-content: center; border-right: 1px solid #5b6b80; background: linear-gradient(#b8c8da, #9fb3ca 50%, #c3d5e8); }
.caption .caption-close { width: 46px; border: 0; background: linear-gradient(#d98070, #c04528 50%, #d87c58); }

.menubar { flex: none; height: 21px; display: flex; align-items: center; border-bottom: 1px solid var(--line); }
.menu-ico { margin: 0 0 0 5px; }
.menubar > button { padding: 0 9px 0 8px; }
.mdi { margin-left: auto; display: flex; gap: 1px; padding-right: 1px; }
.mdi button { width: 18px; height: 18px; display: grid; place-items: center; border: 1px solid #a3b5c8; background: #dde8f5; }

.toolrow { flex: none; height: 27px; display: flex; border-top: 1px solid #fff; }
.second { border-top: 0; }
.toolbar { display: flex; align-items: center; padding: 0 0 0 2px; border-right: 1px solid var(--line); border-bottom: 1px solid var(--line); height: 27px; }
.second .toolbar { border-bottom: 0; }
.grip { width: 3px; height: 20px; margin-right: 1px; background: repeating-linear-gradient(#aaa 0 1px, #f0f0f0 1px 2px); }
.toolbar + .toolbar { padding-left: 4px; }
.tool, .wide, .textual { height: 24px; display: flex; align-items: center; justify-content: center; }
.tool { width: 26px; margin: 0 1px; color: #444; }
.wide { width: 37px; gap: 4px; }
.on { border: 1px solid; border-color: #a0a0a0 #fff #fff #a0a0a0; background: #f8f8f8; }
.sep { width: 1px; height: 21px; margin: 0 3px 0 2px; background: #a0a0a0; }
.textual { gap: 5px; }
.order { width: 107px; }
.auto { width: 111px; margin: 0 1px; }
.glyph { font: bold 13px var(--ui); }
.periods { color: #444; font-size: 10px; }
.search { margin-left: auto; display: flex; height: 24px; margin-right: 1px; }
.search input { width: 173px; border: 1px solid #b0b0b0; background: #fff; padding: 0 22px 0 4px; font: inherit; }
.search > svg { margin: 4px 4px 0 -19px; }
.search button { width: 31px; border: 1px solid #b0b0b0; background: linear-gradient(#eee 50%, #d8d8d8 50%); display: grid; place-items: center; }
.bubble { width: 16px; height: 13px; background: #5f7eb0; color: #fff; font: bold 11px/13px var(--ui); }

.workspace { flex: 1; min-height: 0; display: flex; }
.dock { flex: none; width: 188px; display: flex; flex-direction: column; border-top: 1px solid var(--line); padding: 1px 5px 3px 3px; gap: 4px; }
.pane { display: flex; flex-direction: column; flex: 226 1 0; min-height: 0; border-bottom: 1px solid #ccc; }
.navigator { border-top: 1px solid #bbb; flex: 228 1 0; }
.pane header { flex: none; height: 14px; display: flex; align-items: center; }
.pane h2 { flex: 1; height: 14px; padding-left: 2px; color: #404c5c; background: linear-gradient(90deg, #bccbdc, #d5e4f5); white-space: nowrap; }
.pane header button { width: 12px; display: grid; place-items: center; }
.pane-body { flex: 1; min-height: 0; margin-top: 1px; display: flex; overflow: hidden; background: #fff; border: 1px solid var(--line); border-bottom: 1px solid #000; border-right: 0; }
.pane-scroll { flex: 1; min-width: 0; overflow: hidden; }
.quotes { width: 100%; table-layout: fixed; border-collapse: separate; border-spacing: 0; }
.quotes col.bid { width: 46px; } .quotes col.ask { width: 48px; }
.quotes th { height: 23px; padding: 2px 6px 0; text-align: right; font-weight: normal; background: linear-gradient(#fff, #f2f4f7); border-right: 1px solid #ddd; border-bottom: 3px double #c8c8c8; }
.quotes th:first-child { text-align: left; }
.quotes td { height: 20px; padding: 0 3px; background: #f0fff0; border-right: 1px solid #c8c8c8; border-bottom: 1px solid #c8c8c8; text-align: right; white-space: nowrap; }
.quotes td:first-child { text-align: left; }
.quotes td svg { display: inline-block; vertical-align: -2px; margin-right: 5px; }
.rise td { color: #00f; } .fall td { color: #f00; }
.quotes tr td:first-child { color: #000; }
.scroll { flex: none; width: 16px; background: #f0f0f0; display: flex; flex-direction: column; align-items: center; padding: 7px 0 6px; }
.scroll .end { margin-top: auto; }
.thumb { width: 14px; border: 1px solid #999; border-radius: 2px; background: repeating-linear-gradient(#555 0 1px, transparent 1px 3px) center / 6px 9px no-repeat, linear-gradient(90deg, #f8f8f8, #d4d4d8); }
.high { height: 52px; margin-top: 5px; }
.low { height: 33px; margin-top: 101px; }
.tabs { flex: none; display: flex; align-items: flex-start; height: 19px; padding-left: 3px; }
.tab { position: relative; padding: 2px 9px 2px; color: #777; white-space: nowrap; }
.tab::after { content: ""; position: absolute; right: 0; top: 4px; height: 12px; border-right: 1px solid #666; }
.tab.active { margin-top: -1px; height: 19px; padding: 1px 8px; background: #fff; color: #000; border: 1px solid #000; border-top: 0; }
.pane .tab { padding-left: 7px; padding-right: 8px; }
.tab.active::after { display: none; }
.tab b { color: #e82030; font-size: 9px; margin-left: 3px; vertical-align: -1px; line-height: 10px; }
.tree { flex: 1; overflow: hidden; padding-left: 3px; white-space: nowrap; }
.tree li { display: flex; align-items: center; height: 18px; }
.g { width: 21px; height: 18px; }
.t { width: 17px; height: 16px; margin: 0 5px 0 2px; }

.charts { flex: 1; min-width: 0; display: flex; flex-direction: column; }
.chart { width: 100%; height: auto; background: #000; }
.chart text { font: 9px var(--ui); fill: #fff; }
.chart text.now { fill: #000; }
.charttabs { display: flex; align-items: flex-start; border-top: 1px solid #000; height: 22px; }
.charttabs button { height: 18px; padding: 0 8px; margin-left: 5px; color: #777; }
.charttabs .active { margin-left: 0; background: #fff; color: #000; border: 1px solid #000; border-top: 0; }
.charttabs svg { margin: 6px 5px 0 auto; }

.terminal { flex: none; position: relative; display: flex; height: 278px; padding: 3px 4px 0 1px; border-bottom: 1px solid var(--line); }
.spine { width: 14px; display: flex; flex-direction: column; align-items: flex-start; }
.spine button { height: 12px; margin-left: 1px; }
.spine span { flex: 1; width: 12px; margin: 2px 0 1px; writing-mode: vertical-rl; transform: rotate(180deg); color: #404c5c; background: linear-gradient(#bccbdc, #d5e4f5); line-height: 12px; }
.terminal-main { flex: 1; min-width: 0; display: flex; flex-direction: column; border-right: 1px solid #fff; }
.terminal-body { flex: none; height: 253px; display: flex; overflow: hidden; background: #fff; border: 1px solid var(--line); border-bottom: 1px solid #000; border-right: 0; }
.orders-clip { flex: 1; min-width: 0; overflow: hidden; }
.orders { width: 100%; table-layout: fixed; border-collapse: separate; border-spacing: 0; }
.c-order { width: 154px; } .c-time { width: 214px; } .c-type { width: 107px; } .c-vol { width: 83px; } .c-num { width: 119px; }
.orders th { height: 24px; padding: 2px 4px 0 6px; text-align: right; font-weight: normal; white-space: nowrap; background: linear-gradient(#fff, #f2f4f7); border-right: 1px solid #e2e2e2; border-bottom: 3px double #c8c8c8; }
.orders th:first-child { text-align: left; }
.orders th svg { display: inline-block; margin-left: 8px; }
.orders td { height: 20px; padding: 0 2px 0 3px; text-align: right; white-space: nowrap; border-right: 1px solid #c4c4c4; border-bottom: 1px solid #c4c4c4; }
.orders tr:nth-child(even) td { background: #eaeaea; }
.orders td:first-child { text-align: left; }
.orders td:first-child svg { display: inline-block; vertical-align: -4px; margin-right: 5px; }
.orders td:last-child { border-right: 0; }
.orders td button { margin: 0 5px 0 14px; }
.orders tr.total td { height: 21px; background: #c8c8c8; border-color: #c8c8c8; font-weight: bold; }
.orders .total td:last-child { padding-right: 24px; }
.orders .rest td { background: #eaeaea; }
.boxed { padding: 1px 0; }
.boxed span { width: 15px; height: 16px; display: grid; place-items: center; border: 1px solid #aaa; border-radius: 2px; background: #eee; }
.blue { width: 15px; height: 197px; margin-top: 1px; border-color: #2c7aa8; background: repeating-linear-gradient(#1f6f9f 0 1px, transparent 1px 3px) center / 7px 8px no-repeat, linear-gradient(90deg, #d8f0fc, #a8d8f2); }
.marks { position: absolute; left: 520px; top: 15px; pointer-events: none; }

.statusbar { flex: none; height: 22px; display: flex; align-items: center; padding: 3px 0 0 3px; }
.statusbar > span { height: 16px; line-height: 16px; border-right: 1px solid #999; padding-left: 5px; }
.statusbar .s-main { width: 872px; padding-left: 0; }
.s-profile { width: 116px; } .s-a { width: 102px; } .s-b { width: 70px; } .s-c { width: 66px; }
.statusbar .s-net { flex: 1; display: flex; align-items: center; gap: 29px; border: 0; }
.s-net em { font-style: normal; }
.sizer { align-self: flex-end; }

.taskbar { flex: none; height: 40px; display: flex; align-items: stretch; border-top: 1px solid #4a5f78; background: linear-gradient(90deg, #8a9db8 0, #93aac6 4%, #b0cae8 9%, #a9c4e2 24%, #b6d1ee 29%, #a9c7e6 38%, #b0cdeb 60%, #a8c7e6 70%, #b0ccec 82%, #8fa9c6 86%, #8aa0b9 100%); }
.taskbar button { display: grid; place-items: center; }
.start { width: 53px; margin-right: 7px; }
.task { width: 59px; margin-right: 3px; height: 38px; }
.run { border: 1px solid #66809c; border-radius: 3px; background: #c6d8ea; box-shadow: inset 0 0 0 1px #e4eef8; }
.lit { background: #e3edf7; }
.stack { border-right: 4px double #7d95b0; }
.tray { margin-left: auto; display: flex; align-items: center; gap: 7px; color: #fff; text-align: center; }
.tray > span { margin-right: 9px; padding-bottom: 6px; }
time { display: flex; flex-direction: column; line-height: 17px; margin: 0 4px 0 9px; }
.tray .desktop { width: 14px; align-self: stretch; border: 1px solid #6f87a2; background: linear-gradient(135deg, #b6c7d8, #7f96b0); }
```
FILE: chart.js
```js
// High/low range of each five-minute bar: x, top, bottom.
var RANGES = `192 488 496,194 495 503,198 501 507,204 500 508,208 496 503,212 497 505,216 496 502,220 494 502,224 490 498,228 480 490,230 475 481,234 471 480,236 435 471,238 431 445,240 430 441,242 412 433,244 424 436,246 426 440,248 438 449,250 435 446,254 431 440,256 423 433,260 421 428,266 420 428,268 388 425,270 366 395,272 375 393,274 378 393,276 363 391,278 363 380,280 368 380,284 373 384,288 378 390,290 388 405,292 403 418,296 410 421,300 407 417,302 411 421,306 415 424,310 409 418,316 410 416,320 409 415,324 403 415,326 398 408,328 395 407,332 396 408,334 405 420,338 413 424,342 418 430,346 428 440,350 436 447,352 438 449,356 434 446,360 425 438,364 414 432,368 408 426,372 402 420,376 397 415,380 393 411,384 390 406,388 383 402,392 382 396,396 385 398,400 388 402,404 395 412,408 399 413,412 404 414,416 403 412,420 401 410,426 396 410,430 386 405,434 382 400,438 386 400,442 387 400,446 380 396,450 377 392,454 374 388,458 368 382,460 370 378,464 367 375,466 355 377,470 365 372,472 359 373,476 366 384,478 378 384,482 368 378,484 314 376,486 327 359,488 350 374,490 347 374,494 347 360,496 351 370,498 358 366,500 342 359,504 332 350,506 310 341,508 312 327,510 281 314,512 294 309,514 292 309,516 252 308,518 222 270,520 121 237,522 149 221,524 174 199,526 160 191,528 137 176,530 131 155,532 145 213,534 188 227,536 184 218,538 172 208,540 170 216,542 212 254,544 234 271,546 235 273,548 257 277,550 262 292,552 242 273,554 242 278,556 257 279,558 264 281,560 266 279,562 256 280,564 270 291,566 260 283,568 257 275,570 236 267,572 216 243,574 217 244,576 232 255,578 245 270,580 250 271,582 251 264,584 254 278,588 266 278,590 262 278,592 256 278,594 257 270,596 264 278,598 272 291,600 280 296,602 282 301,604 281 301,606 280 298,608 280 307,610 305 332,612 322 338,614 331 341,616 324 335,618 290 338,620 291 327,622 289 304,624 278 300,626 274 286,628 273 293,630 270 300,632 288 299,634 277 297,636 274 290,638 281 290,640 275 292,642 257 284,644 264 288,646 284 295,648 277 299,650 290 306,652 285 304,654 284 295,656 265 293,658 248 270,660 248 263,664 247 263,666 251 262,668 251 267,670 255 276,672 265 277,674 270 279,678 266 279,680 269 284,682 249 283,684 248 262,686 255 267,688 262 276,690 262 271,692 246 266,694 238 255,696 226 255,698 225 242,700 231 245,702 242 249,704 238 249,706 224 239,708 226 243,710 236 243,712 235 245,714 242 248,716 243 245,718 243 269,720 247 259,722 251 261,724 257 262,726 259 275,728 268 274,730 270 280,732 264 275,734 265 270,736 256 267,738 252 262,740 250 260,744 255 265,746 251 261,748 250 255,750 248 253,752 244 255,754 244 254,756 252 258,760 250 253,762 249 253,766 255 260,768 258 265,770 252 266,772 261 269,774 266 274,776 266 278,778 266 274,780 266 277,782 267 283,784 282 307,786 284 308,788 276 290,790 279 292,792 279 289,794 278 300,796 285 295,798 278 292,800 269 283,804 273 283,806 279 304,808 279 302,810 271 297,812 274 294,814 273 288,816 273 288,818 279 297,820 287 303,822 283 301,824 287 315,826 313 326,828 304 322,830 311 321,832 313 326,834 317 330,836 325 330,840 323 332,842 328 334,844 317 333,846 316 325,848 311 319,850 318 327,854 318 323,856 305 323,858 306 320,862 310 321,864 315 319,868 317 322,872 315 323,876 314 318,880 312 316,884 312 317,888 312 317,890 309 315,892 298 313,896 297 306,898 300 308,902 300 318,904 308 318,906 293 310,910 298 305,912 292 306,914 287 300,916 285 297,918 277 293,920 277 284,922 278 288,924 277 309,926 290 308,928 285 296,930 281 303,932 274 290,934 281 292,938 289 299,942 288 301,944 276 290,946 276 288,948 288 308,950 281 306,952 283 306,954 300 313,956 302 318,958 307 326,960 294 322,962 290 302,964 302 311,966 303 329,968 320 334,970 324 334,972 319 347,974 324 344,976 319 331,980 320 332,982 317 334,984 310 320,986 289 316,988 291 302,990 294 315,992 296 307,996 296 308,1000 299 306,1004 299 312,1008 299 310,1010 300 308,1012 301 320,1014 316 330,1016 318 328,1020 317 326,1022 316 328,1024 315 322,1026 319 348,1028 343 375,1030 356 373,1032 359 391,1034 376 391,1036 376 396,1038 391 411,1040 389 411,1042 365 392,1044 346 370,1046 355 366,1048 352 372,1050 352 367,1052 367 380,1054 363 381,1056 355 379,1058 358 374,1060 359 373,1062 365 386,1064 368 384,1066 361 373,1068 353 366,1070 347 363,1072 340 356,1074 344 361,1076 349 365,1078 362 376,1082 365 380,1084 357 382,1086 375 391,1088 383 401,1090 385 395,1092 383 395,1094 388 401,1096 393 406,1098 397 411,1100 396 407,1102 388 398,1104 375 391,1106 378 401,1108 386 394,1110 385 411,1112 396 411,1114 394 415,1116 386 415,1118 394 415,1120 400 417,1122 409 432,1124 407 424,1126 404 415,1128 401 411,1130 403 429,1132 426 439,1134 432 441,1136 437 444,1138 439 464,1140 453 466,1142 456 468,1144 460 478,1146 455 467,1148 463 473,1150 461 471,1152 453 467,1154 452 468,1156 453 462,1158 448 463,1160 455 463,1162 453 470,1164 456 467,1166 459 469,1168 453 460,1170 447 460,1174 456 463,1178 454 467,1182 457 466,1184 456 465,1186 448 459,1188 445 454,1190 449 458,1192 443 453,1194 445 453,1196 443 450,1198 425 445,1200 423 436,1202 431 446,1204 421 441,1206 422 436,1208 425 439,1210 429 441,1212 427 437,1214 427 438,1216 427 444,1218 438 445,1222 439 445,1224 442 449,1226 437 448,1230 440 449,1232 444 452,1236 442 449,1238 438 446,1242 438 444,1244 424 441,1246 399 426,1248 394 420,1250 384 406,1252 382 395,1254 363 388,1256 365 391,1258 373 391,1260 361 378,1262 365 378,1264 360 372,1266 366 377,1268 355 374,1270 333 360,1272 320 341,1274 325 337,1276 335 342,1280 338 347,1284 339 347,1288 335 342,1292 341 347,1296 343 357,1300 347 356,1304 350 356,1306 340 350,1308 338 347,1310 323 342,1312 327 340,1314 333 340,1318 336 342,1320 329 340,1322 321 342,1324 320 331,1326 321 333,1328 325 336,1332 328 334,1336 334 342,1340 334 342,1344 330 340,1346 326 336,1348 324 332,1350 309 328,1352 295 312,1354 298 312,1356 293 310,1358 309 318,1360 301 322,1362 300 325,1364 320 337,1366 325 331,1368 325 338,1372 323 337,1374 325 355,1376 332 350,1378 330 345,1380 320 336,1382 320 332,1384 323 337,1386 328 346,1390 335 352,1392 330 343,1394 315 347,1396 327 349,1398 334 347,1400 330 342,1404 331 340,1406 328 338,1410 322 331,1414 322 330,1418 319 330,1420 317 327,1424 325 335,1428 325 337,1430 331 346,1434 337 342,1438 343 358,1440 340 350,1442 335 343,1446 334 340,1450 335 341,1454 336 340,1456 337 342,1460 342 355,1464 344 355,1468 355 370,1472 363 371,1476 370 377,1480 380 388,1484 380 390,1486 376 387,1490 375 393,1494 384 394,1498 385 393,1500 378 394,1502 383 398,1504 387 401,1506 367 390,1508 374 380,1510 371 384,1514 375 383,1516 378 388,1518 355 381,1520 360 375,1524 354 375,1526 352 366,1528 339 361,1530 342 362,1532 355 372,1536 350 366,1540 347 363,1544 346 362,1548 345 358,1550 354 366`;

var AVERAGE = "192,487 200,488 210,496 222,500 228,497 235,491 240,478 248,460 257,442 263,433 267,431 273,418 282,398 287,392 292,389 297,391 305,402 313,412 320,416 328,414 333,411 340,410 348,420 356,430 365,432 378,420 390,405 400,397 412,398 425,402 440,398 450,390 460,383 468,375 473,372 483,372 488,367 500,362 507,352 515,337 520,313 525,280 530,243 538,210 543,196 547,197 553,217 560,243 568,264 573,263 577,260 588,261 594,259 598,263 603,273 608,278 617,297 623,303 635,302 640,295 645,284 656,287 662,280 673,273 683,264 692,266 700,259 708,248 720,240 727,247 737,257 748,262 760,255 770,254 780,259 797,278 812,284 823,285 837,303 847,318 855,322 867,319 880,317 890,316 897,312 910,307 922,297 930,295 935,290 945,289 955,292 967,302 977,316 983,319 995,316 1003,307 1012,303 1025,312 1032,328 1040,355 1048,363 1057,374 1063,372 1072,364 1083,364 1093,370 1103,387 1115,396 1128,402 1138,417 1147,437 1158,455 1167,461 1187,459 1197,455 1208,444 1218,436 1230,437 1243,443 1248,437 1260,410 1268,385 1275,362 1285,348 1297,340 1305,347 1320,343 1335,331 1345,332 1363,321 1373,319 1383,327 1393,335 1410,337 1425,329 1437,332 1447,339 1467,342 1477,352 1492,375 1503,385 1518,383 1533,368 1550,363";

var TIMES = "24 Aug 2015,24 Aug 05:10,24 Aug 07:50,24 Aug 10:30,24 Aug 13:10,24 Aug 15:50,24 Aug 18:30,24 Aug 21:10,24 Aug 23:50,25 Aug 02:30,25 Aug 05:10,25 Aug 07:50,25 Aug 10:30,25 Aug 13:10,25 Aug 15:50,25 Aug 18:30,25 Aug 21:10,25 Aug 23:50,26 Aug 02:30,26 Aug 05:10,26 Aug 07:50,26 Aug 10:30".split(",");

var PRICES = "1.17145 1.16850 1.16555 1.16260 1.15965 1.15670 1.15375 1.15080 1.14790 1.14495 1.14200 1.13905 1.13610".split(" ");

var el = function (id) { return document.getElementById(id); };

var points = RANGES.split(",").map(function (s) { return s.trim().split(" ").map(Number); });
var bars = "";
points.forEach(function (p, i) {
  var next = points[i + 1] || p;
  for (var x = p[0]; x < next[0] || x === p[0]; x += 2) {
    var t = next[0] > p[0] ? (x - p[0]) / (next[0] - p[0]) : 0;
    var known = x === p[0];
    var top = Math.round(p[1] + (next[1] - p[1]) * t) + (known ? 0 : (x * 7 % 5) - 2);
    var bottom = Math.round(p[2] + (next[2] - p[2]) * t) + (known ? 0 : (x * 11 % 5) - 2);
    bars += "M" + x + " " + top + "V" + bottom + "h1V" + top + "z";
  }
});
el("bars").setAttribute("d", bars);
el("average").setAttribute("d", "M" + AVERAGE.replace(/ /g, "L"));

var grid = "", ticks = "", labels = "";
for (var gx = 224; gx < 1555; gx += 32) grid += "M" + gx + " 102V518";
PRICES.forEach(function (price, k) {
  var gy = 120 + 33 * k;
  grid += "M193 " + gy + "H1555";
  ticks += "M1556 " + gy + "h3";
  labels += '<text x="1561" y="' + (gy + 4) + '">' + price + "</text>";
});
TIMES.forEach(function (time, i) {
  ticks += "M" + (192 + 64 * i) + " 520v3";
  labels += '<text x="' + (191 + 64 * i) + '" y="532">' + time + "</text>";
});
el("grid").setAttribute("d", grid);
el("ticks").setAttribute("d", ticks);
el("labels").innerHTML = labels;
```
